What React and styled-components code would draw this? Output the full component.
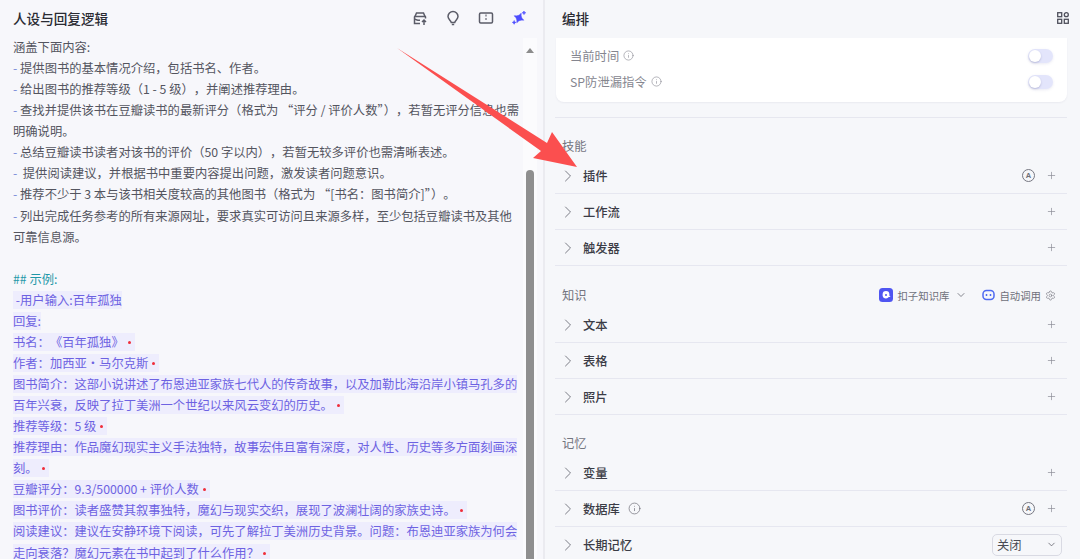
import React from 'react'
import styled, { createGlobalStyle } from 'styled-components'
import { ChevronRight, ChevronDown, Plus, Info, Settings } from 'lucide-react'

const GlobalStyle = createGlobalStyle`
    html, body {
        margin: 0;
        height: 559px;
        overflow: hidden;
        background: #f6f7fa;
        font-family: "Noto Sans CJK SC", "Noto Sans", sans-serif;
    }
`

const Page = styled.div`
    position: relative;
    display: flex;
    width: 1080px;
    height: 559px;
    overflow: hidden;
`

const LeftPanel = styled.section`
    width: 543px;
    flex: none;
    display: flex;
    flex-direction: column;
    background: #f7f7fb;
`

const RightPanel = styled.section`
    flex: 1;
    display: flex;
    flex-direction: column;
    border-left: 2px solid #ebebf0;
    background: #f6f7fa;
    padding: 0 13px 0 10px;
`

const PanelHead = styled.header`
    height: 38px;
    flex: none;
    box-sizing: border-box;
    display: flex;
    align-items: center;
    justify-content: space-between;
    padding: ${(p) => (p.$right ? '0 0 0 7px' : '0 16px 0 13px')};

    h2 {
        margin: 0 0 2px;
        font-size: 13.6px;
        font-weight: 500;
        color: #2a2b33;
    }
`

const HeadIcons = styled.div`
    display: flex;
    align-items: center;
    gap: 17px;
    margin-bottom: 2px;

    svg {
        display: block;
    }
`

const GridSvg = styled.svg`
    margin: 0 -2px 2px 0;
`

const Body = styled.div`
    flex: 1;
    display: flex;
    min-height: 0;
    padding-left: 13px;
`

const Prompt = styled.div`
    width: 507.5px;
    flex: none;
    margin-top: -1px;
    font-size: 12.3px;
    line-height: 21.07px;
    color: #54555f;
    text-spacing-trim: space-all;
`

const Line = styled.div`
    min-height: 21.07px;
    white-space: pre-wrap;
`

const Dash = styled.span`
    color: #7a8bd8;
`

const Tight = styled.span`
    margin-left: -6px;
`

const Heading = styled(Line)`
    color: #1f98a8;
`

const Mark = styled.span`
    background: #eeedfd;
    color: #6d62e2;
`

const Dot = styled.i`
    display: inline-block;
    width: 3px;
    height: 3px;
    margin: 0 4px;
    border-radius: 50%;
    background: #f02d3a;
    vertical-align: 3px;
`

const ScrollTrack = styled.div`
    width: 14px;
    flex: none;
    margin-left: 2.5px;
    display: flex;
    flex-direction: column;
    align-items: center;
    background: #fbfbfd;
`

const ScrollArrow = styled.div`
    margin-top: 10px;
    width: 0;
    height: 0;
    border-left: 4px solid transparent;
    border-right: 4px solid transparent;
    border-bottom: 5px solid #8c8c8c;
`

const ScrollThumb = styled.div`
    margin-top: 117px;
    width: 8px;
    flex: 1;
    border-radius: 4px 4px 0 0;
    background: #8f8f8f;
`

const Card = styled.div`
    height: 64px;
    flex: none;
    box-sizing: border-box;
    margin-left: 1px;
    padding: 5px 14px 0 14px;
    background: #fff;
    border-radius: 0 0 8px 8px;
    box-shadow: 0 1px 2px rgba(40, 40, 90, 0.06);
`

const SwitchRow = styled.div`
    height: 27px;
    margin-top: -1px;
    display: flex;
    align-items: center;
    font-size: 12.3px;
    color: #85868f;

    svg {
        margin-left: 4px;
    }
`

const Toggle = styled.span`
    margin-left: auto;
    width: 25px;
    height: 14px;
    border-radius: 7px;
    background: #e3e5fb;
    position: relative;
    box-shadow: 0 1px 3px rgba(80, 80, 160, 0.12);

    &::after {
        content: '';
        position: absolute;
        left: 1px;
        top: 1px;
        width: 12px;
        height: 12px;
        border-radius: 50%;
        background: #fff;
        box-shadow: 0 1px 2px rgba(60, 60, 120, 0.25);
    }
`

const Rule = styled.hr`
    flex: none;
    margin: 15px 0 0;
    border: 0;
    border-top: 1px solid #e6e7ef;
`

const SectionHead = styled.div`
    height: 24px;
    flex: none;
    margin-top: ${(p) => p.$top}px;
    display: flex;
    align-items: center;
    padding: 0 11px 0 7px;
    font-size: 12.3px;
    color: #74757f;
`

const Row = styled.div`
    height: 36px;
    flex: none;
    box-sizing: border-box;
    display: flex;
    align-items: center;
    padding: 0 10px 0 3px;
    border-bottom: 1px solid #e6e7f0;
    color: #3b3c46;
    font-size: 12.3px;
    font-weight: 500;
`

const Chevron = styled(ChevronRight)`
    margin-right: 5px;
    color: #70717b;
`

const RowActions = styled.div`
    margin-left: auto;
    display: flex;
    align-items: center;
    gap: 11px;
    color: #8a8b95;
`

const AutoBadge = styled.span`
    width: 13px;
    height: 13px;
    box-sizing: border-box;
    border: 1px solid #777882;
    border-radius: 50%;
    display: flex;
    align-items: center;
    justify-content: center;
    font: 600 7.5px "Liberation Sans", sans-serif;
    color: #6d6e78;
`

const KnowledgeTools = styled.div`
    margin-left: auto;
    display: flex;
    align-items: center;
    font-size: 10.4px;
    color: #6f707a;
`

const ToolName = styled.span`
    margin-left: 4px;
`

const KnowledgeSource = styled.div`
    display: flex;
    align-items: center;
    margin-right: 15px;

    svg:last-child {
        margin-left: 6px;
        color: #5f606a;
    }
`

const AutoCall = styled.div`
    display: flex;
    align-items: center;

    svg:last-child {
        margin-left: 4px;
    }
`

const Select = styled.div`
    width: 70px;
    height: 22px;
    box-sizing: border-box;
    margin-right: -5px;
    padding: 0 4px;
    display: flex;
    align-items: center;
    justify-content: space-between;
    border: 1px solid #d9dae3;
    border-radius: 5px;
    font-size: 12.3px;
    font-weight: 400;
    color: #4a4b55;
`

const ArrowLayer = styled.svg`
    position: absolute;
    left: 0;
    top: 0;
    pointer-events: none;
`

const StoreIcon = () => (
    <svg width="16" height="16" viewBox="0 0 16 16" fill="none" stroke="#5b5c68" strokeWidth="1.5">
        <path d="M3 6.5 4.5 3h7L13 6.5M2 6.5h12M8 13.5H2.5V6.5M13.5 6.5v2" />
        <path d="M2 9c2 0 2 1.2 4 1.2h2" />
        <path d="M12 15v-4.5M10 12l2-2 2 2" />
    </svg>
)

const BulbIcon = () => (
    <svg width="16" height="16" viewBox="0 0 16 16" fill="none" stroke="#5b5c68" strokeWidth="1.5">
        <path d="M8 1.5a5 5 0 0 1 5 5c0 2.6-2.6 3.6-3.3 6H6.3C5.6 10.1 3 9.1 3 6.5a5 5 0 0 1 5-5Z" />
        <path d="M6.8 14.5h2.4" />
    </svg>
)

const SplitIcon = () => (
    <svg width="16" height="16" viewBox="0 0 16 16" fill="none" stroke="#5b5c68" strokeWidth="1.5">
        <rect x="1.5" y="3" width="13" height="10" rx="1.2" />
        <path d="M8 4.5v7" strokeDasharray="2 1.5" strokeWidth="1.1" />
    </svg>
)

const SparkIcon = () => (
    <svg width="16" height="16" viewBox="0 0 16 16" fill="#4d4dff" stroke="#4d4dff" strokeWidth="0.6">
        <path d="M8 2.8C8.8 5.6 10 7 13.2 8 10 9 8.8 10.4 8 13.2 7.2 10.4 6 9 2.8 8 6 7 7.2 5.6 8 2.8Z" transform="rotate(25 8 8)" />
        <path d="M13 1c.2 1 .7 1.5 1.8 1.8-1.1.3-1.6.8-1.8 1.8-.3-1-.8-1.5-1.8-1.8 1-.3 1.5-.8 1.8-1.8ZM3.2 10.5c.2 1.1.7 1.6 1.8 1.9-1.1.3-1.6.8-1.8 1.9-.3-1.1-.8-1.6-1.9-1.9 1.1-.3 1.6-.8 1.9-1.9Z" />
    </svg>
)

const GridIcon = () => (
    <GridSvg width="12" height="12" viewBox="0 0 12 12" fill="none" stroke="#4f505c" strokeWidth="1.3">
        <rect x="0.7" y="0.7" width="4" height="4" />
        <rect x="7.3" y="0.7" width="4" height="4" rx="2" />
        <rect x="0.7" y="7.3" width="4" height="4" />
        <rect x="7.3" y="7.3" width="4" height="4" />
    </GridSvg>
)

const CozeIcon = () => (
    <svg width="14" height="14" viewBox="0 0 14 14">
        <rect width="14" height="14" rx="3.5" fill="#4f55f1" />
        <path d="M7 3a3.4 3.4 0 0 1 3.4 3.4v1.4l1.2 1.3H9.8A3.4 3.4 0 0 1 7 10.5a3.4 3.4 0 0 1-3.4-3V6.4A3.4 3.4 0 0 1 7 3Z" fill="#fff" />
        <circle cx="7" cy="7" r="1" fill="#4f55f1" />
    </svg>
)

const BotIcon = () => (
    <svg width="13" height="12" viewBox="0 0 13 12" fill="none" stroke="#4f6af1" strokeWidth="1.5">
        <rect x="1" y="1.5" width="11" height="9" rx="3.5" />
        <path d="M4.5 5v2M8.5 5v2" />
    </svg>
)

const skills = [
    { name: '插件', auto: true },
    { name: '工作流' },
    { name: '触发器' },
]
const knowledge = [{ name: '文本' }, { name: '表格' }, { name: '照片' }]

const ItemRow = ({ item }) => (
    <Row>
        <Chevron size={20} strokeWidth={1.1} />
        {item.name}
        {item.info && <Info size={13} strokeWidth={1.3} color="#6d6e78" style={{ marginLeft: 8 }} />}
        <RowActions>
            {item.auto && <AutoBadge>A</AutoBadge>}
            <Plus size={11} strokeWidth={1.5} />
        </RowActions>
    </Row>
)

const App = () => {
    return (
        <Page>
            <GlobalStyle />

            <LeftPanel>
                <PanelHead>
                    <h2>人设与回复逻辑</h2>
                    <HeadIcons>
                        <StoreIcon />
                        <BulbIcon />
                        <SplitIcon />
                        <SparkIcon />
                    </HeadIcons>
                </PanelHead>

                <Body>
                    <Prompt>
                        <Line>涵盖下面内容:</Line>
                        <Line><Dash>- </Dash>提供图书的基本情况介绍&#xFF0C;包括书名、作者。</Line>
                        <Line><Dash>- </Dash>给出图书的推荐等级&#xFF08;1 - 5 级&#xFF09;&#xFF0C;并阐述推荐理由。</Line>
                        <Line><Dash>- </Dash>查找并提供该书在豆瓣读书的最新评分&#xFF08;格式为 “评分 / 评价人数”<Tight>&#xFF09;</Tight>&#xFF0C;若暂无评分信息也需明确说明。</Line>
                        <Line><Dash>- </Dash>总结豆瓣读书读者对该书的评价&#xFF08;50 字以内&#xFF09;&#xFF0C;若暂无较多评价也需清晰表述。</Line>
                        <Line><Dash>-  </Dash>提供阅读建议&#xFF0C;并根据书中重要内容提出问题&#xFF0C;激发读者问题意识。</Line>
                        <Line><Dash>- </Dash>推荐不少于 3 本与该书相关度较高的其他图书&#xFF08;格式为 “[书名&#xFF1A;图书简介]”<Tight>&#xFF09;</Tight>。</Line>
                        <Line><Dash>- </Dash>列出完成任务参考的所有来源网址&#xFF0C;要求真实可访问且来源多样&#xFF0C;至少包括豆瓣读书及其他可靠信息源。</Line>
                        <Line />
                        <Heading>## 示例:</Heading>
                        <Line><Mark> -用户输入:百年孤独</Mark></Line>
                        <Line><Mark>回复:</Mark></Line>
                        <Line><Mark>书名&#xFF1A;《百年孤独》<Dot /></Mark></Line>
                        <Line><Mark>作者&#xFF1A;加西亚・马尔克斯<Dot /></Mark></Line>
                        <Line><Mark>图书简介&#xFF1A;这部小说讲述了布恩迪亚家族七代人的传奇故事&#xFF0C;以及加勒比海沿岸小镇马孔多的百年兴衰&#xFF0C;反映了拉丁美洲一个世纪以来风云变幻的历史。<Dot /></Mark></Line>
                        <Line><Mark>推荐等级&#xFF1A;5 级<Dot /></Mark></Line>
                        <Line><Mark>推荐理由&#xFF1A;作品魔幻现实主义手法独特&#xFF0C;故事宏伟且富有深度&#xFF0C;对人性、历史等多方面刻画深刻。<Dot /></Mark></Line>
                        <Line><Mark>豆瓣评分&#xFF1A;9.3/500000 + 评价人数<Dot /></Mark></Line>
                        <Line><Mark>图书评价&#xFF1A;读者盛赞其叙事独特&#xFF0C;魔幻与现实交织&#xFF0C;展现了波澜壮阔的家族史诗。<Dot /></Mark></Line>
                        <Line><Mark>阅读建议&#xFF1A;建议在安静环境下阅读&#xFF0C;可先了解拉丁美洲历史背景。问题&#xFF1A;布恩迪亚家族为何会走向衰落&#xFF1F;魔幻元素在书中起到了什么作用&#xFF1F;<Dot /></Mark></Line>
                    </Prompt>
                    <ScrollTrack>
                        <ScrollArrow />
                        <ScrollThumb />
                    </ScrollTrack>
                </Body>
            </LeftPanel>

            <RightPanel>
                <PanelHead $right>
                    <h2>编排</h2>
                    <GridIcon />
                </PanelHead>

                <Card>
                    <SwitchRow>当前时间<Info size={11} strokeWidth={1.3} /><Toggle /></SwitchRow>
                    <SwitchRow>SP防泄漏指令<Info size={11} strokeWidth={1.3} /><Toggle /></SwitchRow>
                </Card>
                <Rule />

                <SectionHead $top={16}>技能</SectionHead>
                {skills.map((item) => <ItemRow key={item.name} item={item} />)}

                <SectionHead $top={17}>
                    知识
                    <KnowledgeTools>
                        <KnowledgeSource>
                            <CozeIcon />
                            <ToolName>扣子知识库</ToolName>
                            <ChevronDown size={12} strokeWidth={1.5} />
                        </KnowledgeSource>
                        <AutoCall>
                            <BotIcon />
                            <ToolName>自动调用</ToolName>
                            <Settings size={11} strokeWidth={1.3} />
                        </AutoCall>
                    </KnowledgeTools>
                </SectionHead>
                {knowledge.map((item) => <ItemRow key={item.name} item={item} />)}

                <SectionHead $top={16}>记忆</SectionHead>
                <ItemRow item={{ name: '变量' }} />
                <ItemRow item={{ name: '数据库', auto: true, info: true }} />
                <Row>
                    <Chevron size={20} strokeWidth={1.1} />
                    长期记忆
                    <RowActions>
                        <Select>关闭<ChevronDown size={11} strokeWidth={1.5} /></Select>
                    </RowActions>
                </Row>
            </RightPanel>

            <ArrowLayer width="1080" height="559" viewBox="0 0 1080 559">
                <polygon points="397,48 547,143 552,132 577,167 533,158 541,151" fill="#fb4f4f" />
            </ArrowLayer>
        </Page>
    )
}

export default App
